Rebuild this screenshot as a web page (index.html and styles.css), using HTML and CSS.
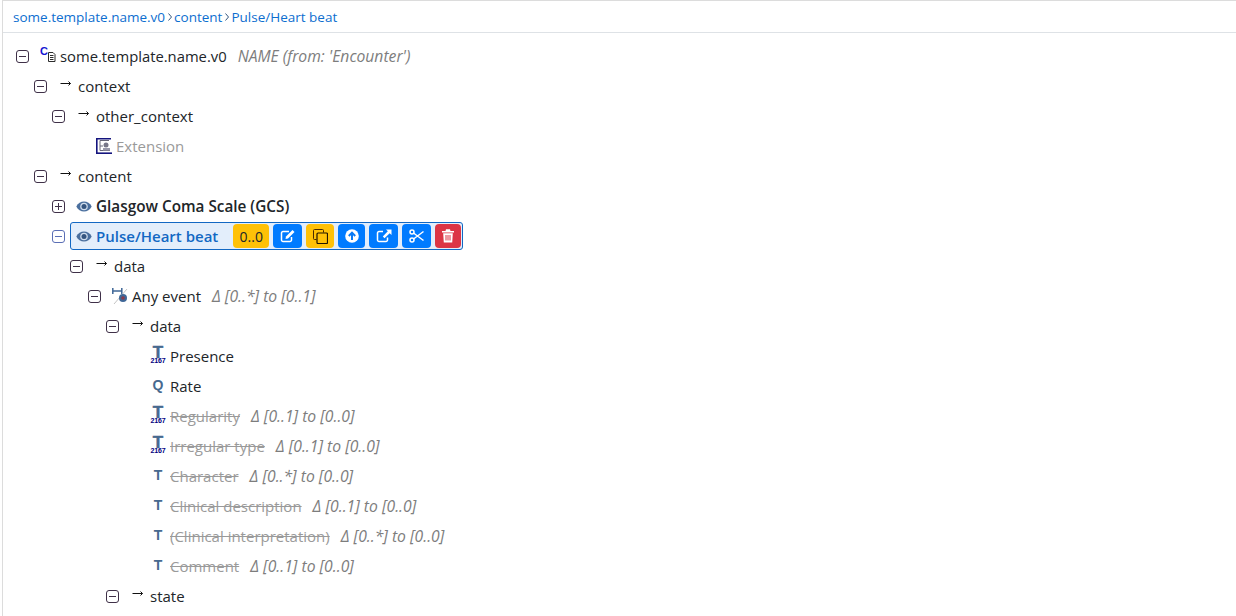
FILE: index.html
```html
<!DOCTYPE html>
<html lang="en">

<head>
    <meta charset="UTF-8">
    <meta name="viewport" content="width=device-width, initial-scale=1.0">
    <title>Template editor</title>
    <link rel="stylesheet" href="styles.css">
</head>

<body>
    <svg class="icon-defs" width="0" height="0">
        <defs>
            <symbol id="i-minus" viewBox="0 0 13 13">
                <rect x="0.5" y="0.5" width="12" height="12" rx="2.5" fill="none" stroke="currentColor"/>
                <path d="M3 6.5h7" stroke="currentColor"/>
            </symbol>
            <symbol id="i-plus" viewBox="0 0 13 13">
                <rect x="0.5" y="0.5" width="12" height="12" rx="2.5" fill="none" stroke="currentColor"/>
                <path d="M3 6.5h7M6.5 3v7" stroke="currentColor"/>
            </symbol>
            <symbol id="i-arrow" viewBox="0 0 12 8">
                <path d="M0.5 3.5h10M8.500 1.500 10.500 3.500 8.500 5.500" fill="none" stroke="#111" stroke-width="1"/>
            </symbol>
            <symbol id="i-eye" viewBox="0 0 16 11">
                <path d="M0.300 5.500C2 2 4.800.4 8 .4S14 2 15.700 5.500C14 9 11.200 10.600 8 10.600S2 9 .3 5.500Z" fill="#4a6f9e"/>
                <circle cx="8" cy="5.500" r="3.800" fill="#cfdcec"/>
                <circle cx="8" cy="5.500" r="2.500" fill="#35557f"/>
            </symbol>
            <symbol id="i-chevron" viewBox="0 0 4 8">
                <path d="M.5 .5 3.500 4 .5 7.500" fill="none" stroke="#33567f"/>
            </symbol>
        </defs>
    </svg>

    <div class="pane">
        <nav class="crumbs">
            <a href="#">some.template.name.v0</a>
            <svg class="crumb-sep"><use href="#i-chevron"/></svg>
            <a href="#">content</a>
            <svg class="crumb-sep"><use href="#i-chevron"/></svg>
            <a href="#">Pulse/Heart beat</a>
        </nav>

        <ul class="tree">
            <li>
                <div class="row">
                    <svg class="toggle"><use href="#i-minus"/></svg>
                    <span class="node-icon">
                        <svg class="root-icon" width="16" height="24" viewBox="0 0 16 24">
                            <text x="0" y="11" class="c-letter">C</text>
                            <path d="M8.500 8.500h4.500l2 2v7H8.500Z" fill="#fff" stroke="#2c2c2c"/>
                            <path d="M10 11.500h3.500M10 13.500h3.500M10 15.500h3.500" stroke="#2c2c2c"/>
                        </svg>
                    </span>
                    <span class="name root-name">some.template.name.v0</span>
                    <span class="note">NAME (from: 'Encounter')</span>
                </div>
                <ul>
                    <li>
                        <div class="row">
                            <svg class="toggle"><use href="#i-minus"/></svg>
                            <span class="node-icon"><svg class="arrow"><use href="#i-arrow"/></svg></span>
                            <span class="name">context</span>
                        </div>
                        <ul>
                            <li>
                                <div class="row">
                                    <svg class="toggle"><use href="#i-minus"/></svg>
                                    <span class="node-icon"><svg class="arrow"><use href="#i-arrow"/></svg></span>
                                    <span class="name">other_context</span>
                                </div>
                                <ul>
                                    <li>
                                        <div class="row leaf">
                                            <span class="node-icon">
                                                <svg width="16" height="16" viewBox="0 0 16 16">
                                                    <path d="M.8 15.200V.8H15" fill="none" stroke="#14147e" stroke-width="1.600"/>
                                                    <path d="M0 15.200H16" stroke="#14147e" stroke-width="1.600"/>
                                                    <path d="M4 2.500h9M4 2.500v10h10M4 8h3" fill="none" stroke="#667"/>
                                                    <circle cx="10" cy="7" r="2.500" fill="#778"/>
                                                    <rect x="7" y="10" width="7" height="2.500" fill="#99a"/>
                                                </svg>
                                            </span>
                                            <span class="name muted">Extension</span>
                                        </div>
                                    </li>
                                </ul>
                            </li>
                        </ul>
                    </li>
                    <li>
                        <div class="row">
                            <svg class="toggle"><use href="#i-minus"/></svg>
                            <span class="node-icon"><svg class="arrow"><use href="#i-arrow"/></svg></span>
                            <span class="name">content</span>
                        </div>
                        <ul>
                            <li>
                                <div class="row">
                                    <svg class="toggle"><use href="#i-plus"/></svg>
                                    <span class="node-icon"><svg class="eye"><use href="#i-eye"/></svg></span>
                                    <span class="name bold">Glasgow Coma Scale (GCS)</span>
                                </div>
                            </li>
                            <li>
                                <div class="row">
                                    <svg class="toggle toggle-active"><use href="#i-minus"/></svg>
                                    <div class="selected">
                                        <svg class="eye"><use href="#i-eye"/></svg>
                                        <span class="name bold selected-name">Pulse/Heart beat</span>
                                        <span class="tool tool-yellow tool-occ">0..0</span>
                                        <button class="tool tool-blue">
                                            <svg width="16" height="14" viewBox="0 0 16 14">
                                                <path d="M11.500 8v3a1.500 1.500 0 0 1-1.500 1.500H3A1.500 1.500 0 0 1 1.500 11V4A1.500 1.500 0 0 1 3 2.500h6" fill="none" stroke="#fff" stroke-width="1.500"/>
                                                <path d="M6 7.500 12.500 1l2 2L8 9.500 5.500 10Z" fill="#fff"/>
                                            </svg>
                                        </button>
                                        <button class="tool tool-yellow tool-copy">
                                            <svg width="15" height="15" viewBox="0 0 15 15">
                                                <path d="M3.500 10.500h-2a1 1 0 0 1-1-1v-8a1 1 0 0 1 1-1h8a1 1 0 0 1 1 1v2" fill="none" stroke="#4a2a00"/>
                                                <rect x="4" y="4" width="10.500" height="10.500" rx="1" fill="none" stroke="#211500" stroke-width="1.200"/>
                                            </svg>
                                        </button>
                                        <button class="tool tool-blue tool-up">
                                            <svg width="14" height="14" viewBox="0 0 14 14">
                                                <circle cx="7" cy="7" r="6.800" fill="#fff"/>
                                                <path d="M7 11V4M3.800 7 7 3.600 10.200 7" fill="none" stroke="#0b7bf5" stroke-width="2"/>
                                            </svg>
                                        </button>
                                        <button class="tool tool-blue">
                                            <svg width="16" height="14" viewBox="0 0 16 14">
                                                <path d="M11.500 8.500V11A1.500 1.500 0 0 1 10 12.500H3A1.500 1.500 0 0 1 1.500 11V4A1.500 1.500 0 0 1 3 2.500h4" fill="none" stroke="#fff" stroke-width="1.500"/>
                                                <path d="M10 .5h5.500V6L13.700 4.300 8.500 9.200 6.800 7.500 11.800 2.300Z" fill="#fff"/>
                                            </svg>
                                        </button>
                                        <button class="tool tool-blue">
                                            <svg width="15" height="14" viewBox="0 0 15 14">
                                                <circle cx="3" cy="3" r="2" fill="none" stroke="#fff" stroke-width="1.500"/>
                                                <circle cx="3" cy="11" r="2" fill="none" stroke="#fff" stroke-width="1.500"/>
                                                <path d="M4.500 4 14.500 11.500M4.500 10 14.500 2.500" stroke="#fff" stroke-width="1.500"/>
                                            </svg>
                                        </button>
                                        <button class="tool tool-red">
                                            <svg width="12" height="14" viewBox="0 0 12 14">
                                                <path d="M0 2h12v1.500H0ZM4 .3h4L8.500 2h-5Z" fill="#fff"/>
                                                <path d="M1.200 4.300h9.600l-.6 9.200H1.800Z" fill="#fff"/>
                                                <path d="M4 6v5.500M6 6v5.500M8 6v5.500" stroke="#dc3545"/>
                                            </svg>
                                        </button>
                                    </div>
                                </div>
                                <ul>
                                    <li>
                                        <div class="row">
                                            <svg class="toggle"><use href="#i-minus"/></svg>
                                            <span class="node-icon"><svg class="arrow"><use href="#i-arrow"/></svg></span>
                                            <span class="name">data</span>
                                        </div>
                                        <ul>
                                            <li>
                                                <div class="row">
                                                    <svg class="toggle"><use href="#i-minus"/></svg>
                                                    <span class="node-icon">
                                                        <svg width="16" height="16" viewBox="0 0 16 16">
                                                            <path d="M.8 0v6M.8 3h9M9.800 0v6" stroke="#3f6797" stroke-width="1.500" fill="none"/>
                                                            <path d="M2 16 15 1" stroke="#c4c4c4"/>
                                                            <circle cx="11" cy="10" r="4" fill="#3f6797"/>
                                                            <circle cx="11" cy="10" r="1.800" fill="#8a3a4a"/>
                                                        </svg>
                                                    </span>
                                                    <span class="name">Any event</span>
                                                    <span class="note">&Delta; [0..*] to [0..1]</span>
                                                </div>
                                                <ul>
                                                    <li>
                                                        <div class="row">
                                                            <svg class="toggle"><use href="#i-minus"/></svg>
                                                            <span class="node-icon"><svg class="arrow"><use href="#i-arrow"/></svg></span>
                                                            <span class="name">data</span>
                                                        </div>
                                                        <ul>
                                                            <li>
                                                                <div class="row leaf">
                                                                    <span class="node-icon coded-icon"><b>T</b><small>2167</small></span>
                                                                    <span class="name">Presence</span>
                                                                </div>
                                                            </li>
                                                            <li>
                                                                <div class="row leaf">
                                                                    <span class="node-icon type-icon">Q</span>
                                                                    <span class="name">Rate</span>
                                                                </div>
                                                            </li>
                                                            <li>
                                                                <div class="row leaf">
                                                                    <span class="node-icon coded-icon"><b>T</b><small>2167</small></span>
                                                                    <span class="name removed">Regularity</span>
                                                                    <span class="note">&Delta; [0..1] to [0..0]</span>
                                                                </div>
                                                            </li>
                                                            <li>
                                                                <div class="row leaf">
                                                                    <span class="node-icon coded-icon"><b>T</b><small>2167</small></span>
                                                                    <span class="name removed">Irregular type</span>
                                                                    <span class="note">&Delta; [0..1] to [0..0]</span>
                                                                </div>
                                                            </li>
                                                            <li>
                                                                <div class="row leaf">
                                                                    <span class="node-icon type-icon">T</span>
                                                                    <span class="name removed">Character</span>
                                                                    <span class="note">&Delta; [0..*] to [0..0]</span>
                                                                </div>
                                                            </li>
                                                            <li>
                                                                <div class="row leaf">
                                                                    <span class="node-icon type-icon">T</span>
                                                                    <span class="name removed">Clinical description</span>
                                                                    <span class="note">&Delta; [0..1] to [0..0]</span>
                                                                </div>
                                                            </li>
                                                            <li>
                                                                <div class="row leaf">
                                                                    <span class="node-icon type-icon">T</span>
                                                                    <span class="name removed">(Clinical interpretation)</span>
                                                                    <span class="note">&Delta; [0..*] to [0..0]</span>
                                                                </div>
                                                            </li>
                                                            <li>
                                                                <div class="row leaf">
                                                                    <span class="node-icon type-icon">T</span>
                                                                    <span class="name removed">Comment</span>
                                                                    <span class="note">&Delta; [0..1] to [0..0]</span>
                                                                </div>
                                                            </li>
                                                        </ul>
                                                    </li>
                                                    <li>
                                                        <div class="row">
                                                            <svg class="toggle"><use href="#i-minus"/></svg>
                                                            <span class="node-icon"><svg class="arrow"><use href="#i-arrow"/></svg></span>
                                                            <span class="name">state</span>
                                                        </div>
                                                    </li>
                                                </ul>
                                            </li>
                                        </ul>
                                    </li>
                                </ul>
                            </li>
                        </ul>
                    </li>
                </ul>
            </li>
        </ul>
    </div>
</body>

</html>
```

FILE: styles.css
```css
html, body {
    height: 100%;
}

body {
    margin: 0;
    overflow: hidden;
    background-color: white;
    color: #212529;
    font-family: "Open Sans", "Noto Sans", Arial, sans-serif;
    font-size: 15px;
}

ul {
    list-style: none;
    margin: 0;
    padding: 0 0 0 18px;
}

button {
    cursor: pointer;
    border: none;
    padding: 0;
}

.icon-defs {
    position: absolute;
}

.pane {
    height: 100%;
    margin-left: 2px;
    border-left: 1px solid #dcdcdc;
    border-top: 1px solid #dcdcdc;
}

.crumbs {
    display: flex;
    align-items: center;
    height: 31px;
    padding-left: 10px;
    border-bottom: 1px solid #dee2e6;
    font-size: 13.5px;
}

.crumbs a {
    color: #0d6ecf;
    text-decoration: none;
}

.crumb-sep {
    width: 4px;
    height: 8px;
    margin: 0 2.5px;
}

.tree {
    padding: 8px 0 0 13px;
}

.row {
    display: flex;
    align-items: center;
    height: 30px;
    white-space: nowrap;
}

.leaf {
    padding-left: 26px;
}

.toggle {
    flex: none;
    width: 13px;
    height: 13px;
    margin-right: 11px;
    color: #3f3048;
}

.toggle-active {
    color: #5b6fb5;
    margin-right: 5px;
}

.node-icon {
    flex: none;
    display: flex;
    align-items: center;
    justify-content: center;
    width: 16px;
    height: 16px;
    margin-right: 4px;
}

.root-icon {
    flex: none;
}

.c-letter {
    fill: #1414d2;
    font-family: "Liberation Sans", Arial, sans-serif;
    font-size: 11px;
    font-weight: bold;
}

.arrow {
    width: 12px;
    height: 8px;
    margin-top: -4px;
}

.eye {
    flex: none;
    width: 16px;
    height: 11px;
}

.type-icon {
    color: #47698f;
    font-family: "Liberation Sans", Arial, sans-serif;
    font-size: 14px;
    font-weight: bold;
    margin-top: -2px;
}

.coded-icon {
    flex-direction: column;
    justify-content: flex-start;
    font-family: "Liberation Sans", Arial, sans-serif;
    margin-top: -2px;
}

.coded-icon b {
    color: #47698f;
    font-size: 17px;
    line-height: 11px;
    height: 11px;
    -webkit-text-stroke: 0.5px #47698f;
}

.coded-icon small {
    color: #00007f;
    font-size: 7px;
    font-weight: bold;
    line-height: 6px;
    letter-spacing: -0.2px;
}

.name {
    font-size: 15px;
}

.root-name {
    font-size: 14.8px;
}

.bold {
    font-size: 15.3px;
    font-weight: 600;
}

.muted {
    color: #9a9a9a;
}

.removed {
    color: #9a9a9a;
    text-decoration: line-through;
}

.note {
    margin-left: 11px;
    color: #7d7d7d;
    font-size: 15.7px;
    font-style: italic;
}

.selected {
    display: flex;
    align-items: center;
    gap: 4px;
    box-sizing: border-box;
    height: 28px;
    padding: 0 1px 0 5px;
    background-color: #e3eefb;
    border: 1px solid #1268c3;
    border-radius: 3px;
}

.selected-name {
    color: #1268c3;
    font-size: 15px;
    margin-right: 11px;
}

.tool {
    flex: none;
    display: flex;
    align-items: center;
    justify-content: center;
    width: 29px;
    height: 24px;
    border-radius: 4px;
}

.tool-occ {
    width: 36px;
    font-size: 14px;
}

.tool-copy {
    width: 28px;
}

.tool-up {
    width: 27px;
}

.tool-blue {
    background-color: #007bff;
}

.tool-yellow {
    background-color: #ffc107;
    color: #212529;
}

.tool-red {
    width: 26px;
    background-color: #dc3545;
}
```
